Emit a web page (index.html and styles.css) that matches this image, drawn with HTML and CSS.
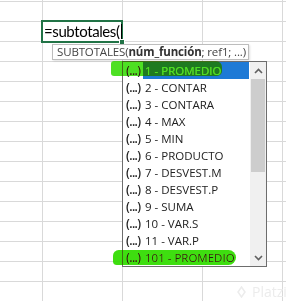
FILE: index.html
```html
<!DOCTYPE html>
<html lang="es">
<head>
<meta charset="utf-8">
<title>Subtotales</title>
<link rel="stylesheet" href="styles.css">
</head>
<body>
<div class="sheet">
  <div class="editor"><span class="formula">=subtotales(</span><span class="caret"></span><span class="handle"></span></div>
  <div class="tip">SUBTOTALES(<b>núm_función</b>; ref1; ...)</div>
  <div class="list">
    <ul class="items">
      <li class="item sel"><span class="ico">(...)</span><span class="lbl">1 - PROMEDIO</span></li>
      <li class="item"><span class="ico">(...)</span><span class="lbl">2 - CONTAR</span></li>
      <li class="item"><span class="ico">(...)</span><span class="lbl">3 - CONTARA</span></li>
      <li class="item"><span class="ico">(...)</span><span class="lbl">4 - MAX</span></li>
      <li class="item"><span class="ico">(...)</span><span class="lbl">5 - MIN</span></li>
      <li class="item"><span class="ico">(...)</span><span class="lbl">6 - PRODUCTO</span></li>
      <li class="item"><span class="ico">(...)</span><span class="lbl">7 - DESVEST.M</span></li>
      <li class="item"><span class="ico">(...)</span><span class="lbl">8 - DESVEST.P</span></li>
      <li class="item"><span class="ico">(...)</span><span class="lbl">9 - SUMA</span></li>
      <li class="item"><span class="ico">(...)</span><span class="lbl">10 - VAR.S</span></li>
      <li class="item"><span class="ico">(...)</span><span class="lbl">11 - VAR.P</span></li>
      <li class="item"><span class="ico">(...)</span><span class="lbl">101 - PROMEDIO</span></li>
    </ul>
    <div class="scroll">
      <div class="btn"><svg width="9" height="6" viewBox="0 0 9 6"><path d="M1 5 L4.5 1.5 L8 5" fill="none" stroke="#606060" stroke-width="1.6"/></svg></div>
      <div class="thumb"></div>
      <div class="track"></div>
      <div class="btn"><svg width="9" height="6" viewBox="0 0 9 6"><path d="M1 1 L4.5 4.5 L8 1" fill="none" stroke="#606060" stroke-width="1.6"/></svg></div>
    </div>
  </div>
  <div class="mark mark-top"></div>
  <div class="mark mark-bottom"></div>
  <div class="wm"><svg width="9" height="12" viewBox="0 0 9 12"><path d="M4.5 1 L8 6 L4.5 11 L1 6 Z" fill="none" stroke="#ececec" stroke-width="1.5"/></svg><span>Platzi</span></div>
</div>
</body>
</html>
```

FILE: styles.css
```css
* { box-sizing: border-box; }
html, body { margin: 0; padding: 0; background: #fff; }
.sheet {
  position: relative;
  width: 286px;
  height: 301px;
  overflow: hidden;
  background-color: #fff;
  background-image:
    repeating-linear-gradient(to right, transparent 0, transparent 42px, #d9d9d9 42px, #d9d9d9 43px, transparent 43px, transparent 80px),
    repeating-linear-gradient(to bottom, transparent 0, transparent 1px, #d9d9d9 1px, #d9d9d9 2px, transparent 2px, transparent 20px);
}
.editor {
  position: absolute;
  left: 41px;
  top: 20px;
  width: 82px;
  height: 23px;
  border: 2px solid #217346;
  background: #fff;
  display: flex;
  align-items: center;
  padding-left: 1px;
}
.formula {
  font-family: Lato, "Liberation Sans", sans-serif;
  font-size: 15px;
  color: #000;
  line-height: 19px;
  letter-spacing: -0.4px;
}
.caret {
  width: 1px;
  height: 16px;
  background: #000;
  margin-left: 1px;
}
.handle {
  position: absolute;
  right: -4px;
  bottom: -4px;
  width: 6px;
  height: 6px;
  background: #217346;
  border: 1px solid #fff;
}
.tip {
  position: absolute;
  left: 52px;
  top: 44px;
  width: 197px;
  height: 16px;
  border: 1px solid #bdbdbd;
  background: #fff;
  box-shadow: 1px 1px 2px rgba(0,0,0,0.12);
  font-family: "Open Sans", "Noto Sans", sans-serif;
  font-size: 11.5px;
  line-height: 14px;
  color: #444;
  padding-left: 4px;
  letter-spacing: -0.15px;
  white-space: nowrap;
}
.tip b { font-weight: 700; color: #333; }
.list {
  position: absolute;
  left: 122px;
  top: 61px;
  width: 145px;
  height: 206px;
  border: 1px solid #6d6d6d;
  background: #fff;
  display: flex;
}
.items {
  list-style: none;
  margin: 0;
  padding: 0;
  flex: 1;
  display: flex;
  flex-direction: column;
}
.item {
  height: 17px;
  display: flex;
  align-items: center;
  font-family: "Open Sans", "Noto Sans", sans-serif;
  font-size: 11.5px;
  color: #222;
  white-space: nowrap;
}
.ico {
  width: 20px;
  padding-left: 3px;
  font-weight: 600;
  letter-spacing: -0.6px;
  font-size: 12px;
  color: #222;
}
.lbl {
  flex: 1;
  height: 17px;
  line-height: 17px;
  padding-left: 2px;
  margin-right: 1px;
}
.sel .lbl { background: #1e7ad6; color: #fff; }
.scroll {
  width: 16px;
  background: #f0f0f0;
  display: flex;
  flex-direction: column;
}
.btn {
  height: 17px;
  display: flex;
  align-items: center;
  justify-content: center;
}
.thumb {
  height: 93px;
  margin: 0 1px;
  background: #cdcdcd;
}
.track { flex: 1; }
.mark {
  position: absolute;
  background: rgb(62, 222, 16);
  mix-blend-mode: darken;
  border-radius: 3px 6px 5px 3px;
}
.mark-top { left: 111px; top: 61px; width: 111px; height: 15px; opacity: 0.92; }
.mark-bottom { left: 113px; top: 250px; width: 123px; height: 15px; border-radius: 6px 8px 8px 4px; }
.wm {
  position: absolute;
  left: 237px;
  top: 282px;
  display: flex;
  align-items: center;
  gap: 6px;
  font-family: "Open Sans", sans-serif;
  font-size: 14px;
  color: #ececec;
}
```
